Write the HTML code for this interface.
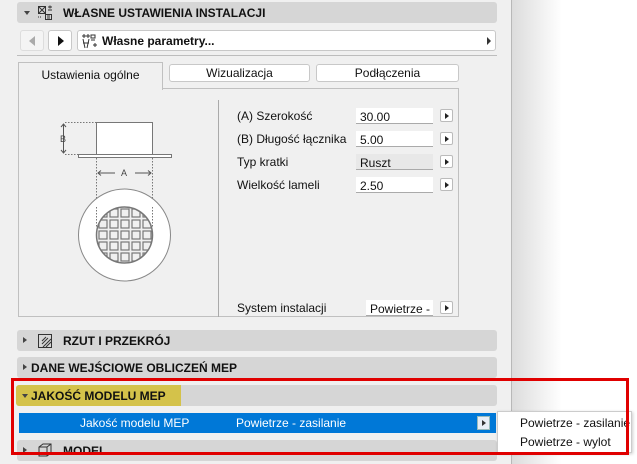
<!DOCTYPE html><html><head><meta charset="utf-8"><style>
*{box-sizing:border-box;margin:0;padding:0}
body{width:637px;height:464px;overflow:hidden;background:#fff;font-family:"Liberation Sans",sans-serif;font-size:12px;color:#111;position:relative}
.a{position:absolute}
.panel{left:0;top:0;width:512px;height:464px;background:#f0f0f0;border-right:1px solid #b8b8b8}
.shadow{left:512px;top:0;width:50px;height:464px;background:linear-gradient(90deg,#dcdcdc,#fff)}
.bar{left:17px;width:480px;height:21px;background:#d6d6d6;border-radius:3px;font-weight:bold;font-size:12px;line-height:23px}
.btn{background:#fff;border:1px solid #c8c8c8;border-radius:3px}
.sm{width:13px;height:13px;background:#fff;border:1px solid #bbb;border-radius:2px}
.sm:after{content:"";position:absolute;left:4px;top:3px;border-left:4px solid #222;border-top:3px solid transparent;border-bottom:3px solid transparent}
.fld{background:#fff;border-bottom:1px solid #aaa;height:16px;line-height:18px;padding-left:4px}
</style></head><body>
<div class="a panel"></div>
<div class="a shadow"></div>

<div class="a bar" style="top:2px">
 <span class="a" style="left:7px;top:9px;border-top:4px solid #444;border-left:3px solid transparent;border-right:3px solid transparent"></span>
 <svg class="a" style="left:20px;top:3px" width="16" height="16" viewBox="0 0 16 16" fill="none" stroke="#333" stroke-width="1"><rect x="1.5" y="1.5" width="7" height="7"/><path d="M1.5 1.5l7 7M8.5 1.5l-7 7M11 2h4M13 0.5v3M11 5h4"/><rect x="8.5" y="9.5" width="6" height="5"/><path d="M10 11h3M10 13h3M1 12h1M3 12h1"/></svg>
 <span class="a" style="left:46px;top:0">WŁASNE USTAWIENIA INSTALACJI</span>
</div>

<div class="a btn" style="left:20px;top:30px;width:24px;height:21px;border-color:#ddd;background:#f4f4f4"><span class="a" style="left:8px;top:5px;border-right:6px solid #aaa;border-top:5px solid transparent;border-bottom:5px solid transparent"></span></div>
<div class="a btn" style="left:48px;top:30px;width:24px;height:21px"><span class="a" style="left:9px;top:5px;border-left:6px solid #111;border-top:5px solid transparent;border-bottom:5px solid transparent"></span></div>
<div class="a btn" style="left:77px;top:30px;width:419px;height:21px">
 <svg class="a" style="left:3px;top:2px" width="16" height="16" viewBox="0 0 16 16" fill="none" stroke="#333"><path d="M1 3h8M3 1v4M7 1v4M2 6l2 9M8 6l-2 9M2 10h6M10 2h4v3h-4zM10 7h4M12 12h4M14 10v4"/></svg>
 <span class="a" style="left:24px;top:3px;font-weight:bold">Własne parametry...</span>
 <span class="a" style="left:409px;top:6px;border-left:4px solid #333;border-top:4px solid transparent;border-bottom:4px solid transparent"></span>
</div>
<div class="a" style="left:17px;top:55px;width:480px;height:1px;background:#bdbdbd"></div>

<div class="a" style="left:18px;top:62px;width:145px;height:28px;background:#f0f0f0;border:1px solid #c0c0c0;border-bottom:none;text-align:center;line-height:24px;z-index:2">Ustawienia ogólne</div>
<div class="a btn" style="left:169px;top:64px;width:141px;height:18px;text-align:center;line-height:17px">Wizualizacja</div>
<div class="a btn" style="left:316px;top:64px;width:143px;height:18px;text-align:center;line-height:17px">Podłączenia</div>
<div class="a" style="left:18px;top:88px;width:441px;height:229px;border:1px solid #c0c0c0"></div>

<svg class="a" style="left:55px;top:115px" width="130" height="175" viewBox="0 0 130 175" fill="none">
 <rect x="41.5" y="7.5" width="56" height="32" fill="#fff" stroke="#777"/>
 <rect x="23.5" y="39.5" width="93" height="3" fill="#fff" stroke="#777"/>
 <path d="M10 7.5h31M10 39.5h14" stroke="#777" stroke-dasharray="1.5 1.5"/>
 <path d="M8.5 9v29" stroke="#555"/><path d="M6 12l2.5-3 2.5 3M6 35l2.5 3 2.5-3" stroke="#555"/>
 <text x="5" y="27" font-size="9" fill="#444" font-family="Liberation Sans">B</text>
 <path d="M41.5 43v70M97.5 43v70" stroke="#777" stroke-dasharray="1.5 1.5"/>
 <path d="M43 58h17M80 58h16" stroke="#555"/><path d="M46 55.5l-3 2.5 3 2.5M93 55.5l3 2.5-3 2.5" stroke="#555"/>
 <text x="66" y="61" font-size="9" fill="#444" font-family="Liberation Sans">A</text>
 <circle cx="69.5" cy="120" r="46" fill="#fff" stroke="#888"/>
 <path d="M41.5 92v20M97.5 92v20" stroke="#777" stroke-dasharray="1.5 1.5"/>
 <clipPath id="c"><circle cx="69.5" cy="120" r="28"/></clipPath>
 <circle cx="69.5" cy="120" r="28" fill="#f0f0f0" stroke="#777" stroke-width="1.5"/>
 <g clip-path="url(#c)" fill="none" stroke="#777" stroke-width="1.2">
  <rect x="44" y="94" width="8" height="8"/><rect x="55" y="94" width="8" height="8"/><rect x="66" y="94" width="8" height="8"/><rect x="77" y="94" width="8" height="8"/><rect x="88" y="94" width="8" height="8"/>
  <rect x="44" y="105" width="8" height="8"/><rect x="55" y="105" width="8" height="8"/><rect x="66" y="105" width="8" height="8"/><rect x="77" y="105" width="8" height="8"/><rect x="88" y="105" width="8" height="8"/>
  <rect x="44" y="116" width="8" height="8"/><rect x="55" y="116" width="8" height="8"/><rect x="66" y="116" width="8" height="8"/><rect x="77" y="116" width="8" height="8"/><rect x="88" y="116" width="8" height="8"/>
  <rect x="44" y="127" width="8" height="8"/><rect x="55" y="127" width="8" height="8"/><rect x="66" y="127" width="8" height="8"/><rect x="77" y="127" width="8" height="8"/><rect x="88" y="127" width="8" height="8"/>
  <rect x="44" y="138" width="8" height="8"/><rect x="55" y="138" width="8" height="8"/><rect x="66" y="138" width="8" height="8"/><rect x="77" y="138" width="8" height="8"/><rect x="88" y="138" width="8" height="8"/>
 </g>
</svg>

<div class="a" style="left:218px;top:100px;width:1px;height:217px;background:#aaa"></div>
<div class="a" style="left:237px;top:109px">(A) Szerokość</div>
<div class="a fld" style="left:356px;top:108px;width:77px">30.00</div>
<div class="a sm" style="left:440px;top:109px"></div>
<div class="a" style="left:237px;top:132px">(B) Długość łącznika</div>
<div class="a fld" style="left:356px;top:131px;width:77px">5.00</div>
<div class="a sm" style="left:440px;top:132px"></div>
<div class="a" style="left:237px;top:155px">Typ kratki</div>
<div class="a fld" style="left:356px;top:154px;width:77px;background:#e8e8e8">Ruszt</div>
<div class="a sm" style="left:440px;top:155px"></div>
<div class="a" style="left:237px;top:178px">Wielkość lameli</div>
<div class="a fld" style="left:356px;top:177px;width:77px">2.50</div>
<div class="a sm" style="left:440px;top:178px"></div>
<div class="a" style="left:237px;top:301px">System instalacji</div>
<div class="a fld" style="left:366px;top:300px;width:67px;overflow:hidden;white-space:nowrap">Powietrze - z</div>
<div class="a sm" style="left:440px;top:301px"></div>

<div class="a bar" style="top:330px">
 <span class="a" style="left:6px;top:7px;border-left:4px solid #444;border-top:3px solid transparent;border-bottom:3px solid transparent"></span>
 <svg class="a" style="left:20px;top:3px" width="16" height="16" viewBox="0 0 16 16" fill="none" stroke="#333"><rect x="1.5" y="1.5" width="13" height="13"/><path d="M6 14l8-8M9 14l5-5M5 11l6-6M5 8l4-4" stroke-width="1"/></svg>
 <span class="a" style="left:46px;top:0">RZUT I PRZEKRÓJ</span>
</div>
<div class="a bar" style="top:357px">
 <span class="a" style="left:6px;top:7px;border-left:4px solid #444;border-top:3px solid transparent;border-bottom:3px solid transparent"></span>
 <span class="a" style="left:14px;top:0">DANE WEJŚCIOWE OBLICZEŃ MEP</span>
</div>
<div class="a bar" style="top:385px">
 <div class="a" style="left:-1px;top:0;width:165px;height:21px;background:#d4c24a;border-radius:3px 0 0 3px"></div>
 <span class="a" style="left:5px;top:9px;border-top:4px solid #444;border-left:3px solid transparent;border-right:3px solid transparent"></span>
 <span class="a" style="left:14px;top:0">JAKOŚĆ MODELU MEP</span>
</div>
<div class="a" style="left:19px;top:413px;width:477px;height:20px;background:#0078d7;color:#fff;line-height:21px">
 <span class="a" style="left:61px">Jakość modelu MEP</span>
 <span class="a" style="left:217px">Powietrze - zasilanie</span>
 <div class="a" style="left:458px;top:3px;width:13px;height:14px;background:#e8eef6;border:1px solid #9bb"><span class="a" style="left:4px;top:3px;border-left:4px solid #333;border-top:3px solid transparent;border-bottom:3px solid transparent"></span></div>
</div>
<div class="a bar" style="top:440px">
 <span class="a" style="left:6px;top:7px;border-left:4px solid #444;border-top:3px solid transparent;border-bottom:3px solid transparent"></span>
 <svg class="a" style="left:20px;top:2px" width="16" height="16" viewBox="0 0 16 16" fill="none" stroke="#333"><path d="M2 5l4-3h8v9l-4 3H2zM2 5h8v9M10 5l4-3"/></svg>
 <span class="a" style="left:46px;top:0">MODEL</span>
</div>
<div class="a" style="left:497px;top:411px;width:135px;height:42px;background:#fff;border:1px solid #ccc;box-shadow:1px 1px 3px rgba(0,0,0,.2)">
 <div class="a" style="left:22px;top:4px">Powietrze - zasilanie</div>
 <div class="a" style="left:22px;top:23px">Powietrze - wylot</div>
</div>
<div class="a" style="left:11px;top:378px;width:618px;height:77px;border:3px solid #e00000"></div>
</body></html>
